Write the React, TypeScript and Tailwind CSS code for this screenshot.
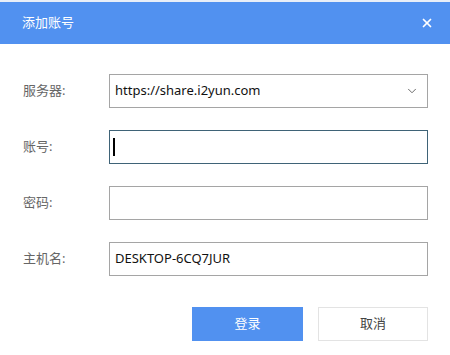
import { X, ChevronDown } from "lucide-react"

const font = { fontFamily: '"Noto Sans", "Noto Sans CJK SC", sans-serif' }

function Row({ label, children }: { label: string; children: React.ReactNode }) {
  return (
    <div className="flex items-center h-[34px]">
      <div className="w-[109px] shrink-0 pl-[23px] text-[13px] text-[#666]">{label}</div>
      {children}
    </div>
  )
}

export default function App() {
  return (
    <div className="w-[450px] h-[355px] bg-white" style={font}>
      <div className="h-[2px] bg-[#e8eef8]" />
      <div className="h-[42px] bg-[#5191f0] flex items-center justify-between pl-[22px] pr-[16px]">
        <span className="text-[13px] text-white">添加账号</span>
        <X className="w-[14px] h-[14px] text-white" strokeWidth={3} />
      </div>

      <div className="pt-[30px] flex flex-col gap-[22px] pr-[22px]">
        <Row label="服务器:">
          <div className="flex-1 h-[34px] border border-[#a5a5a5] flex items-center justify-between pl-[5px] pr-[8px] text-[13px] text-[#111]">
            <span>https://share.i2yun.com</span>
            <ChevronDown className="w-[14px] h-[14px] text-[#555]" strokeWidth={1.5} />
          </div>
        </Row>
        <Row label="账号:">
          <div className="flex-1 h-[34px] border border-[#3f6377] flex items-center pl-[3px]">
            <div className="w-[1.5px] h-[18px] bg-black" />
          </div>
        </Row>
        <Row label="密码:">
          <div className="flex-1 h-[34px] border border-[#a5a5a5]" />
        </Row>
        <Row label="主机名:">
          <div className="flex-1 h-[34px] border border-[#a5a5a5] flex items-center pl-[5px] text-[13px] text-[#111]">
            DESKTOP-6CQ7JUR
          </div>
        </Row>
      </div>

      <div className="flex justify-end gap-[15px] pr-[22px] mt-[31px]">
        <button className="w-[111px] h-[34px] bg-[#5191f0] text-white text-[13px]">登录</button>
        <button className="w-[110px] h-[34px] border border-[#e3e3e3] text-[#444] text-[13px]">取消</button>
      </div>
    </div>
  )
}
